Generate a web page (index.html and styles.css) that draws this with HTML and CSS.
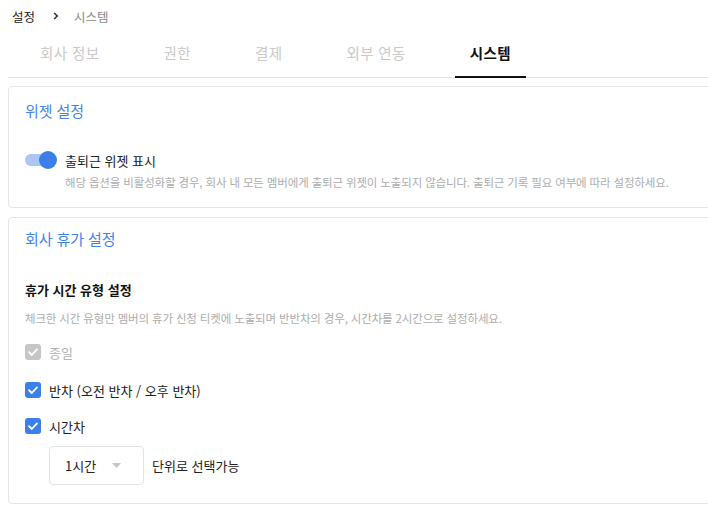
FILE: index.html
```html
<!DOCTYPE html>
<html lang="ko">
<head>
<meta charset="utf-8">
<link rel="stylesheet" href="styles.css">
</head>
<body>
<div class="page">
  <div class="crumbs">
    <span class="crumb-root">설정</span>
    <svg class="crumb-sep" width="6" height="8" viewBox="0 0 6 8"><path d="M1.2 1 L4.2 4 L1.2 7" fill="none" stroke="#333" stroke-width="1.6"/></svg>
    <span class="crumb-cur">시스템</span>
  </div>
  <nav class="tabs">
    <div class="tab">회사 정보</div>
    <div class="tab">권한</div>
    <div class="tab">결제</div>
    <div class="tab">외부 연동</div>
    <div class="tab active">시스템</div>
  </nav>

  <section class="card card-widget">
    <h2 class="card-title">위젯 설정</h2>
    <div class="toggle-row">
      <span class="toggle"><span class="toggle-thumb"></span></span>
      <span class="toggle-label">출퇴근 위젯 표시</span>
    </div>
    <p class="desc desc-indent">해당 옵션을 비활성화할 경우, 회사 내 모든 멤버에게 출퇴근 위젯이 노출되지 않습니다. 출퇴근 기록 필요 여부에 따라 설정하세요.</p>
  </section>

  <section class="card card-leave">
    <h2 class="card-title">회사 휴가 설정</h2>
    <h3 class="sub-title">휴가 시간 유형 설정</h3>
    <p class="desc desc-leave">체크한 시간 유형만 멤버의 휴가 신청 티켓에 노출되며 반반차의 경우, 시간차를 2시간으로 설정하세요.</p>
    <div class="check-row row-full disabled">
      <svg class="check" width="16" height="16" viewBox="0 0 16 16"><rect width="16" height="16" rx="3" fill="#c6c6c6"/><path d="M4 8.2 L6.8 11 L12 5.4" fill="none" stroke="#fff" stroke-width="1.8" stroke-linecap="round" stroke-linejoin="round"/></svg>
      <span class="check-label">종일</span>
    </div>
    <div class="check-row row-half">
      <svg class="check" width="16" height="16" viewBox="0 0 16 16"><rect width="16" height="16" rx="3" fill="#3b80ea"/><path d="M4 8.2 L6.8 11 L12 5.4" fill="none" stroke="#fff" stroke-width="1.8" stroke-linecap="round" stroke-linejoin="round"/></svg>
      <span class="check-label">반차 (오전 반차 / 오후 반차)</span>
    </div>
    <div class="check-row row-hour">
      <svg class="check" width="16" height="16" viewBox="0 0 16 16"><rect width="16" height="16" rx="3" fill="#3b80ea"/><path d="M4 8.2 L6.8 11 L12 5.4" fill="none" stroke="#fff" stroke-width="1.8" stroke-linecap="round" stroke-linejoin="round"/></svg>
      <span class="check-label">시간차</span>
    </div>
    <div class="unit-row">
      <div class="select">
        <span class="select-value">1시간</span>
        <svg class="caret" width="9" height="5" viewBox="0 0 9 5"><path d="M0 0 H9 L4.5 5 Z" fill="#c4c4c4"/></svg>
      </div>
      <span class="unit-text">단위로 선택가능</span>
    </div>
  </section>
</div>
</body>
</html>
```

FILE: styles.css
```css
* { box-sizing: border-box; }
html, body { margin: 0; padding: 0; background: #fff; overflow: hidden; }
body {
  font-family: "Noto Sans CJK KR", "Noto Sans", sans-serif;
  color: #222;
  width: 708px;
  height: 511px;
}
.page {
  padding-left: 8px;
  width: 730px;
}
.crumbs {
  display: flex;
  align-items: center;
  height: 20px;
  margin-top: 6px;
  padding-left: 4px;
  font-size: 12.5px;
}
.crumb-root { color: #222; }
.crumb-sep { margin: 0 0 0 18px; }
.crumb-cur { color: #8a8a8a; margin-left: 15px; }

.tabs {
  display: flex;
  gap: 34px;
  margin-top: 4px;
  padding-left: 17px;
  border-bottom: 1px solid #e3e3e3;
}
.tab {
  height: 48px;
  line-height: 46px;
  padding: 0 15px;
  font-size: 14.5px;
  letter-spacing: 0.4px;
  color: #c9c9c9;
  border-bottom: 2px solid transparent;
  margin-bottom: -1px;
}
.tab.active {
  color: #111;
  font-weight: 700;
  border-bottom-color: #111;
}

.card {
  border: 1px solid #e6e6e6;
  border-radius: 4px;
  padding: 15px 16px 16px;
  margin-top: 8px;
}
.card-leave { margin-top: 9px; padding-top: 12px; padding-bottom: 18px; }
.card-title {
  margin: 0;
  font-size: 15px;
  letter-spacing: -0.1px;
  line-height: 18px;
  font-weight: 400;
  color: #3f85e6;
}
.toggle-row {
  display: flex;
  align-items: center;
  height: 20px;
  margin-top: 30px;
}
.toggle {
  position: relative;
  display: inline-block;
  width: 32px;
  height: 18px;
}
.toggle::before {
  content: "";
  position: absolute;
  left: 0;
  top: 3px;
  width: 27px;
  height: 12px;
  border-radius: 6px;
  background: #a9c6f4;
}
.toggle-thumb {
  position: absolute;
  right: 0;
  top: 0;
  width: 18px;
  height: 18px;
  border-radius: 50%;
  background: #3b80ea;
}
.toggle-label {
  margin-left: 8px;
  font-size: 13px;
  color: #222;
}
.desc {
  margin: 0;
  font-size: 11.5px;
  letter-spacing: -0.15px;
  line-height: 18px;
  color: #adadad;
  white-space: nowrap;
}
.desc-indent { margin-top: 3px; padding-left: 40px; }
.sub-title {
  margin: 32px 0 0;
  font-size: 13px;
  line-height: 20px;
  font-weight: 700;
  color: #111;
}
.desc-leave { margin-top: 9px; }
.check-row {
  display: flex;
  align-items: center;
  height: 20px;
}
.row-full { margin-top: 15px; }
.row-half { margin-top: 18px; }
.row-hour { margin-top: 16px; }
.check { flex: none; }
.check-label {
  margin-left: 8px;
  font-size: 13px;
  color: #222;
}
.disabled .check-label { color: #b3b3b3; }
.unit-row {
  display: flex;
  align-items: center;
  margin-top: 10px;
  padding-left: 24px;
}
.select {
  display: flex;
  align-items: center;
  width: 95px;
  height: 39px;
  border: 1px solid #e3e3e3;
  border-radius: 4px;
  padding-left: 15px;
}
.select-value { font-size: 13px; color: #222; }
.caret { margin-left: 16px; }
.unit-text {
  margin-left: 8px;
  font-size: 13px;
  color: #222;
}
```
